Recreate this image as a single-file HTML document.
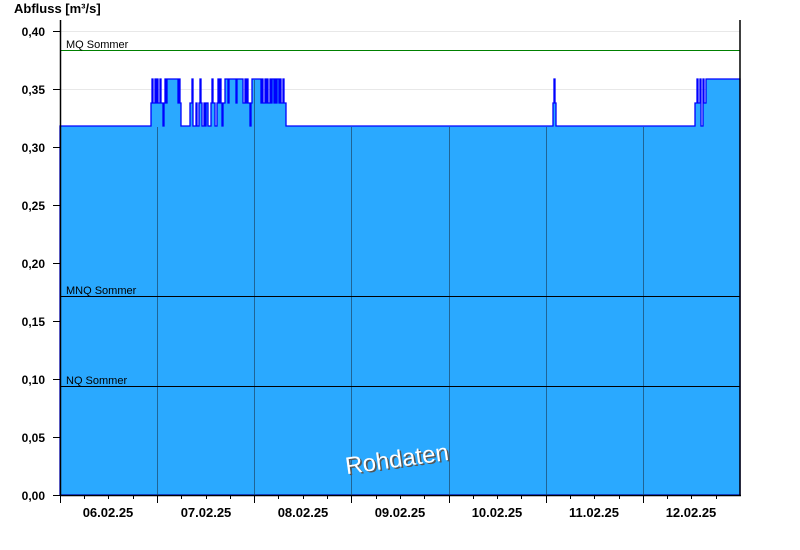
<!DOCTYPE html>
<html><head><meta charset="utf-8"><style>
html,body{margin:0;padding:0;background:#fff;width:800px;height:550px;overflow:hidden}
svg text{font-family:"Liberation Sans",Arial,sans-serif}
</style></head><body>
<svg width="800" height="550" viewBox="0 0 800 550" xmlns="http://www.w3.org/2000/svg">
<text x="14" y="13" font-size="13" font-weight="bold" fill="#000">Abfluss [m³/s]</text>
<g stroke="#e8e8e8" stroke-width="1">
<line x1="60" x2="740" y1="31.5" y2="31.5"/><line x1="60" x2="740" y1="89.5" y2="89.5"/>
<line x1="60" x2="740" y1="147.5" y2="147.5"/><line x1="60" x2="740" y1="205.5" y2="205.5"/>
<line x1="60" x2="740" y1="263.5" y2="263.5"/><line x1="60" x2="740" y1="321.5" y2="321.5"/>
<line x1="60" x2="740" y1="379.5" y2="379.5"/><line x1="60" x2="740" y1="437.5" y2="437.5"/>
</g>
<path fill="#2aa9ff" stroke="#0000ff" stroke-width="1.3" d="M60,495 V126 H151 V103 H152 V79 H153 V103 H155 V79 H156 V103 H157 V79 H158 V103 H160 V79 H161 V103 H163 V126 H164 V103 H165 V79 H166 V103 H167 V79 H178 V103 H179 V79 H180 V103 H181 V126 H190 V103 H192 V79 H193 V126 H196 V103 H197 V126 H199 V103 H200 V79 H201 V103 H202 V126 H204 V103 H205 V126 H206 V103 H208 V126 H211 V103 H212 V79 H213 V103 H215 V126 H217 V103 H218 V79 H219 V103 H220 V79 H221 V103 H222 V126 H223 V103 H225 V79 H228 V103 H229 V79 H236 V103 H237 V79 H243 V103 H245 V79 H246 V103 H247 V79 H248 V103 H250 V126 H251 V103 H252 V79 H261 V103 H262 V79 H263 V103 H265 V79 H266 V103 H267 V79 H268 V103 H270 V79 H271 V103 H272 V79 H274 V103 H275 V79 H276 V103 H277 V79 H279 V103 H280 V79 H281 V103 H283 V79 H284 V103 H286 V126 H553 V103 H554 V79 H555 V103 H556 V126 H695 V103 H697 V79 H698 V103 H700 V79 H701 V126 H703 V79 H704 V103 H706 V79 H740 V495 Z"/>
<g stroke="#1f6496" stroke-width="1">
<line x1="157.5" x2="157.5" y1="127" y2="495"/><line x1="254.5" x2="254.5" y1="80" y2="495"/>
<line x1="351.5" x2="351.5" y1="127" y2="495"/><line x1="449.5" x2="449.5" y1="127" y2="495"/>
<line x1="546.5" x2="546.5" y1="127" y2="495"/><line x1="643.5" x2="643.5" y1="127" y2="495"/>
</g>
<line x1="60" x2="740" y1="50.5" y2="50.5" stroke="#008000" stroke-width="1"/>
<line x1="60" x2="740" y1="296.5" y2="296.5" stroke="#000" stroke-width="1"/>
<line x1="60" x2="740" y1="386.5" y2="386.5" stroke="#000" stroke-width="1"/>
<g font-size="11" fill="#000">
<text x="66" y="48">MQ Sommer</text>
<text x="66" y="294">MNQ Sommer</text>
<text x="66" y="384">NQ Sommer</text>
</g>
<g transform="translate(398,467) rotate(-8)">
<text x="1.5" y="1.5" font-size="24" text-anchor="middle" fill="#555">Rohdaten</text>
<text x="0" y="0" font-size="24" text-anchor="middle" fill="#fff">Rohdaten</text>
</g>
<g stroke="#000" stroke-width="1.5">
<line x1="60.5" x2="60.5" y1="20" y2="496"/>
<line x1="740" x2="740" y1="20" y2="496"/>
<line x1="60" x2="741" y1="495.5" y2="495.5"/>
</g>
<g stroke="#000" stroke-width="1">
<line x1="53" x2="60" y1="31.5" y2="31.5"/><line x1="53" x2="60" y1="89.5" y2="89.5"/>
<line x1="53" x2="60" y1="147.5" y2="147.5"/><line x1="53" x2="60" y1="205.5" y2="205.5"/>
<line x1="53" x2="60" y1="263.5" y2="263.5"/><line x1="53" x2="60" y1="321.5" y2="321.5"/>
<line x1="53" x2="60" y1="379.5" y2="379.5"/><line x1="53" x2="60" y1="437.5" y2="437.5"/>
<line x1="53" x2="60" y1="495.5" y2="495.5"/>
<line x1="60.5" x2="60.5" y1="495" y2="503"/><line x1="157.5" x2="157.5" y1="495" y2="503"/>
<line x1="254.5" x2="254.5" y1="495" y2="503"/><line x1="351.5" x2="351.5" y1="495" y2="503"/>
<line x1="449.5" x2="449.5" y1="495" y2="503"/><line x1="546.5" x2="546.5" y1="495" y2="503"/>
<line x1="643.5" x2="643.5" y1="495" y2="503"/>
<line x1="84.5" x2="84.5" y1="495" y2="499"/><line x1="108.5" x2="108.5" y1="495" y2="499"/><line x1="133.5" x2="133.5" y1="495" y2="499"/>
<line x1="181.5" x2="181.5" y1="495" y2="499"/><line x1="206.5" x2="206.5" y1="495" y2="499"/><line x1="230.5" x2="230.5" y1="495" y2="499"/>
<line x1="278.5" x2="278.5" y1="495" y2="499"/><line x1="303.5" x2="303.5" y1="495" y2="499"/><line x1="327.5" x2="327.5" y1="495" y2="499"/>
<line x1="376.5" x2="376.5" y1="495" y2="499"/><line x1="400.5" x2="400.5" y1="495" y2="499"/><line x1="424.5" x2="424.5" y1="495" y2="499"/>
<line x1="473.5" x2="473.5" y1="495" y2="499"/><line x1="497.5" x2="497.5" y1="495" y2="499"/><line x1="521.5" x2="521.5" y1="495" y2="499"/>
<line x1="570.5" x2="570.5" y1="495" y2="499"/><line x1="594.5" x2="594.5" y1="495" y2="499"/><line x1="619.5" x2="619.5" y1="495" y2="499"/>
<line x1="667.5" x2="667.5" y1="495" y2="499"/><line x1="691.5" x2="691.5" y1="495" y2="499"/><line x1="716.5" x2="716.5" y1="495" y2="499"/>
</g>
<g font-size="12" font-weight="bold" fill="#000" text-anchor="end">
<text x="45" y="36">0,40</text><text x="45" y="94">0,35</text><text x="45" y="152">0,30</text>
<text x="45" y="210">0,25</text><text x="45" y="268">0,20</text><text x="45" y="326">0,15</text>
<text x="45" y="384">0,10</text><text x="45" y="442">0,05</text><text x="45" y="500">0,00</text>
</g>
<g font-size="13" font-weight="bold" fill="#000" text-anchor="middle">
<text x="108" y="517">06.02.25</text><text x="206" y="517">07.02.25</text><text x="303" y="517">08.02.25</text>
<text x="400" y="517">09.02.25</text><text x="497" y="517">10.02.25</text><text x="594" y="517">11.02.25</text>
<text x="691" y="517">12.02.25</text>
</g>
</svg>
</body></html>
